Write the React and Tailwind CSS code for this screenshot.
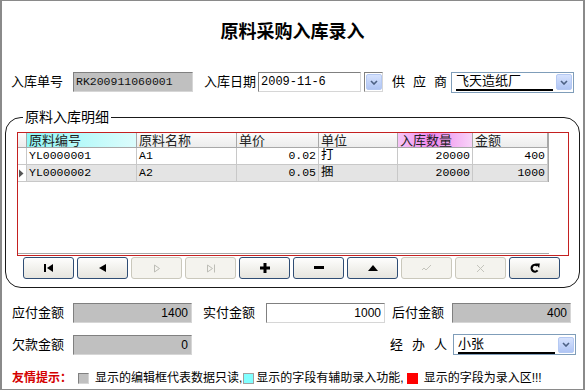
import clsx from 'clsx'

const sunken =
  'border border-t-[#808080] border-l-[#808080] border-r-[#d6d6d6] border-b-[#d6d6d6]'

function ComboArrow() {
  return (
    <div className="flex h-[16px] w-[16px] items-center justify-center rounded-[2px] border border-[#b5c9f3] bg-gradient-to-b from-[#d6e2fd] to-[#b0c5f4]">
      <svg width="8" height="5" viewBox="0 0 8 5">
        <path d="M1 1 L4 4 L7 1" fill="none" stroke="#4d6185" strokeWidth="1.6" />
      </svg>
    </div>
  )
}

function Combo({ value }) {
  return (
    <div className="flex h-[21px] w-[123px] items-center justify-between border border-[#7f9db9] bg-white pl-[4px] pr-[1px]">
      <span className="w-[97px] border-b-2 border-black text-[13px] leading-[16px]">{value}</span>
      <ComboArrow />
    </div>
  )
}

function Spread({ text, className }) {
  return (
    <div className={clsx('flex justify-between text-[13px] leading-[20px]', className)}>
      {text.split('').map((c, i) => (
        <span key={i}>{c}</span>
      ))}
    </div>
  )
}

const cols = [
  { t: '原料编号', w: 'w-[110px]', hd: 'bg-gradient-to-r from-[#8ef6f6] to-[#dcfcfc]' },
  { t: '原料名称', w: 'w-[100px]' },
  { t: '单价', w: 'w-[82px]', right: true },
  { t: '单位', w: 'w-[79px]' },
  { t: '入库数量', w: 'w-[75px]', right: true, hd: 'bg-[linear-gradient(to_right,#f6c6f6,#ee86ee_45%,#f8d4f8)]' },
  { t: '金额', w: 'w-[75px]', right: true },
]

const rows = [
  ['YL0000001', 'A1', '0.02', '打', '20000', '400'],
  ['YL0000002', 'A2', '0.05', '捆', '20000', '1000'],
]

const icon = {
  first: (
    <svg width="10" height="8" viewBox="0 0 10 8">
      <rect x="0" y="0" width="2" height="8" fill="#000" />
      <path d="M9 0 L3 4 L9 8 Z" fill="#000" />
    </svg>
  ),
  prev: (
    <svg width="7" height="8" viewBox="0 0 7 8">
      <path d="M7 0 L0 4 L7 8 Z" fill="#000" />
    </svg>
  ),
  next: (
    <svg width="8" height="9" viewBox="0 0 8 9">
      <path d="M1.5 1 L6.5 4.5 L1.5 8 Z" fill="none" stroke="#bdbdb6" />
    </svg>
  ),
  last: (
    <svg width="10" height="9" viewBox="0 0 10 9">
      <path d="M1.5 1 L6.5 4.5 L1.5 8 Z" fill="none" stroke="#bdbdb6" />
      <path d="M8.5 0.5 L8.5 8.5" stroke="#bdbdb6" />
    </svg>
  ),
  plus: (
    <svg width="10" height="10" viewBox="0 0 10 10">
      <path d="M5 0 L5 10 M0 5 L10 5" stroke="#000" strokeWidth="3" />
    </svg>
  ),
  minus: (
    <svg width="10" height="4" viewBox="0 0 10 4">
      <rect x="0" y="0" width="10" height="3" fill="#000" />
    </svg>
  ),
  up: (
    <svg width="10" height="6" viewBox="0 0 10 6">
      <path d="M0 6 L5 0 L10 6 Z" fill="#000" />
    </svg>
  ),
  ok: (
    <svg width="12" height="8" viewBox="0 0 12 8">
      <path d="M1 6 L3 4 L5 6 L10 1" fill="none" stroke="#c4c4bc" />
    </svg>
  ),
  cancel: (
    <svg width="9" height="9" viewBox="0 0 9 9">
      <path d="M1 1 L8 8 M8 1 L1 8" stroke="#c4c4bc" />
    </svg>
  ),
  refresh: (
    <svg width="10" height="10" viewBox="0 0 10 10">
      <path d="M7.6 7.4 A3.4 3.4 0 1 1 7.2 2.6" stroke="#000" strokeWidth="2.2" fill="none" />
      <path d="M5.2 0.4 L9.8 0.6 L9.2 5 Z" fill="#000" />
    </svg>
  ),
}

const buttons = [
  ['first', false],
  ['prev', false],
  ['next', true],
  ['last', true],
  ['plus', false],
  ['minus', false],
  ['up', false],
  ['ok', true],
  ['cancel', true],
  ['refresh', false],
]

export default function App() {
  return (
    <div className="h-[390px] w-[585px] overflow-hidden border-t border-b border-l-2 border-r-2 border-[#8a8a8a] bg-white font-['Liberation_Sans','Noto_Sans_CJK_SC',sans-serif] text-black">
      {/* Title */}
      <h1 className="pt-[20px] text-center text-[18px] font-bold leading-[22px]">原料采购入库录入</h1>

      {/* Header fields */}
      <div className="mt-[29px] flex h-[20px] items-center pl-[9px]">
        <div className="w-[62px] text-[13px] leading-[20px]">入库单号</div>
        <div className={clsx(sunken, 'flex h-[20px] w-[120px] items-center bg-[#c0c0c0] pl-[2px]')}>
          <span className="font-['Liberation_Mono',monospace] text-[11.5px] text-[#111]">RK200911060001</span>
        </div>
        <div className="ml-[11px] w-[54px] text-[13px] leading-[20px]">入库日期</div>
        <div className={clsx(sunken, 'flex h-[20px] w-[103px] items-center bg-white pl-[2px]')}>
          <span className="font-['Liberation_Mono',monospace] text-[12px]">2009-11-6</span>
        </div>
        <div className={clsx(sunken, 'ml-[3px] flex h-[20px] w-[19px] items-center justify-center bg-white')}>
          <ComboArrow />
        </div>
        <Spread text="供应商" className="ml-[9px] w-[55px]" />
        <div className="ml-[4px]">
          <Combo value="飞天造纸厂" />
        </div>
      </div>

      {/* Detail group */}
      <fieldset className="mx-[3px] mt-[16px] w-[575px] rounded-[16px] border border-[#1a1a1a] px-0 pt-0 pb-[8px]">
        <legend className="ml-[17px] px-[2px] text-[14px] leading-[18px]">原料入库明细</legend>
        <div className="ml-[11px] mr-[10px] mt-[6px] flex h-[124px] flex-col border border-[#c42020]">
          <div className="w-[531px] border-r border-[#a8a8a8] font-['Liberation_Mono','Noto_Sans_CJK_SC',monospace] text-[11.5px]">
            <div className="flex h-[15px] border-b border-[#a8a8a8] bg-gradient-to-b from-[#fbfbfb] to-[#ececec]">
              <div className="w-[9px] border-r border-[#a8a8a8]" />
              {cols.map((c) => (
                <div
                  key={c.t}
                  className={clsx(
                    c.w,
                    c.hd,
                    'border-r border-[#a8a8a8] pl-[2px] font-["Noto_Sans_CJK_SC",sans-serif] text-[13px] leading-[14px] text-[#222]'
                  )}
                >
                  {c.t}
                </div>
              ))}
            </div>
            {rows.map((r, i) => (
              <div key={i} className={clsx('flex h-[17px] border-b border-[#c8c8c8]', i === 1 ? 'bg-[#e4e4e4]' : 'bg-white')}>
                <div className="flex w-[9px] items-center border-r border-[#c8c8c8] bg-white">
                  {i === 1 && (
                    <svg width="6" height="9" viewBox="0 0 6 9">
                      <path d="M1 0.5 L5.5 4.5 L1 8.5 Z" fill="#555" />
                    </svg>
                  )}
                </div>
                {cols.map((c, j) => (
                  <div
                    key={j}
                    className={clsx(
                      c.w,
                      'border-r border-[#c8c8c8] px-[2px] leading-[16px]',
                      c.right ? 'text-right' : 'text-left',
                      j === 3 && 'text-[12.5px]'
                    )}
                  >
                    {r[j]}
                  </div>
                ))}
              </div>
            ))}
          </div>
          <div className="flex-1" />
          <div className="mb-[1px] h-px w-[531px] bg-[#a8a8a8]" />
        </div>

        <div className="ml-[17px] mt-[1px] flex gap-[3px]">
          {buttons.map(([k, dis]) => (
            <div
              key={k}
              className={clsx(
                'flex h-[22px] w-[51px] items-center justify-center rounded-[3px] border',
                dis
                  ? 'border-[#cac8bc] bg-[#f4f3ee]'
                  : 'border-[#2f4d74] bg-gradient-to-b from-[#fefefd] to-[#e6e5de]'
              )}
            >
              {icon[k]}
            </div>
          ))}
        </div>
      </fieldset>

      {/* Totals */}
      <div className="mt-[15px] flex h-[20px] items-center pl-[10px]">
        <div className="w-[61px] text-[13px] leading-[20px]">应付金额</div>
        <div className={clsx(sunken, 'h-[20px] w-[119px] bg-[#c0c0c0] pr-[3px] text-right text-[12px] leading-[18px]')}>1400</div>
        <div className="ml-[11px] w-[63px] text-[13px] leading-[20px]">实付金额</div>
        <div className={clsx(sunken, 'h-[20px] w-[119px] bg-white pr-[3px] text-right text-[12px] leading-[18px]')}>1000</div>
        <div className="ml-[7px] w-[60px] text-[13px] leading-[20px]">后付金额</div>
        <div className={clsx(sunken, 'h-[20px] w-[119px] bg-[#c0c0c0] pr-[3px] text-right text-[12px] leading-[18px]')}>400</div>
      </div>
      <div className="mt-[11px] flex h-[21px] items-center pl-[10px]">
        <div className="w-[61px] text-[13px] leading-[20px]">欠款金额</div>
        <div className={clsx(sunken, 'h-[20px] w-[119px] bg-[#c0c0c0] pr-[3px] text-right text-[12px] leading-[18px]')}>0</div>
        <Spread text="经办人" className="ml-[198px] w-[57px]" />
        <div className="ml-[6px]">
          <Combo value="小张" />
        </div>
      </div>

      {/* Hint */}
      <div className="mt-[15px] flex items-center pl-[10px] text-[12px] leading-[16px]">
        <span className="font-bold text-[#d40000]">友情提示：</span>
        <span className={clsx(sunken, 'ml-[6px] h-[11px] w-[11px] bg-[#c0c0c0]')} />
        <span className="ml-[6px]">显示的编辑框代表数据只读,</span>
        <span className="ml-[1px] h-[11px] w-[11px] border border-[#a0a0a0] bg-[#80ffff]" />
        <span className="ml-[2px]">显示的字段有辅助录入功能,</span>
        <span className="ml-[3px] h-[11px] w-[11px] bg-[#ff0000]" />
        <span className="ml-[6px]">显示的字段为录入区!!!</span>
      </div>
    </div>
  )
}
